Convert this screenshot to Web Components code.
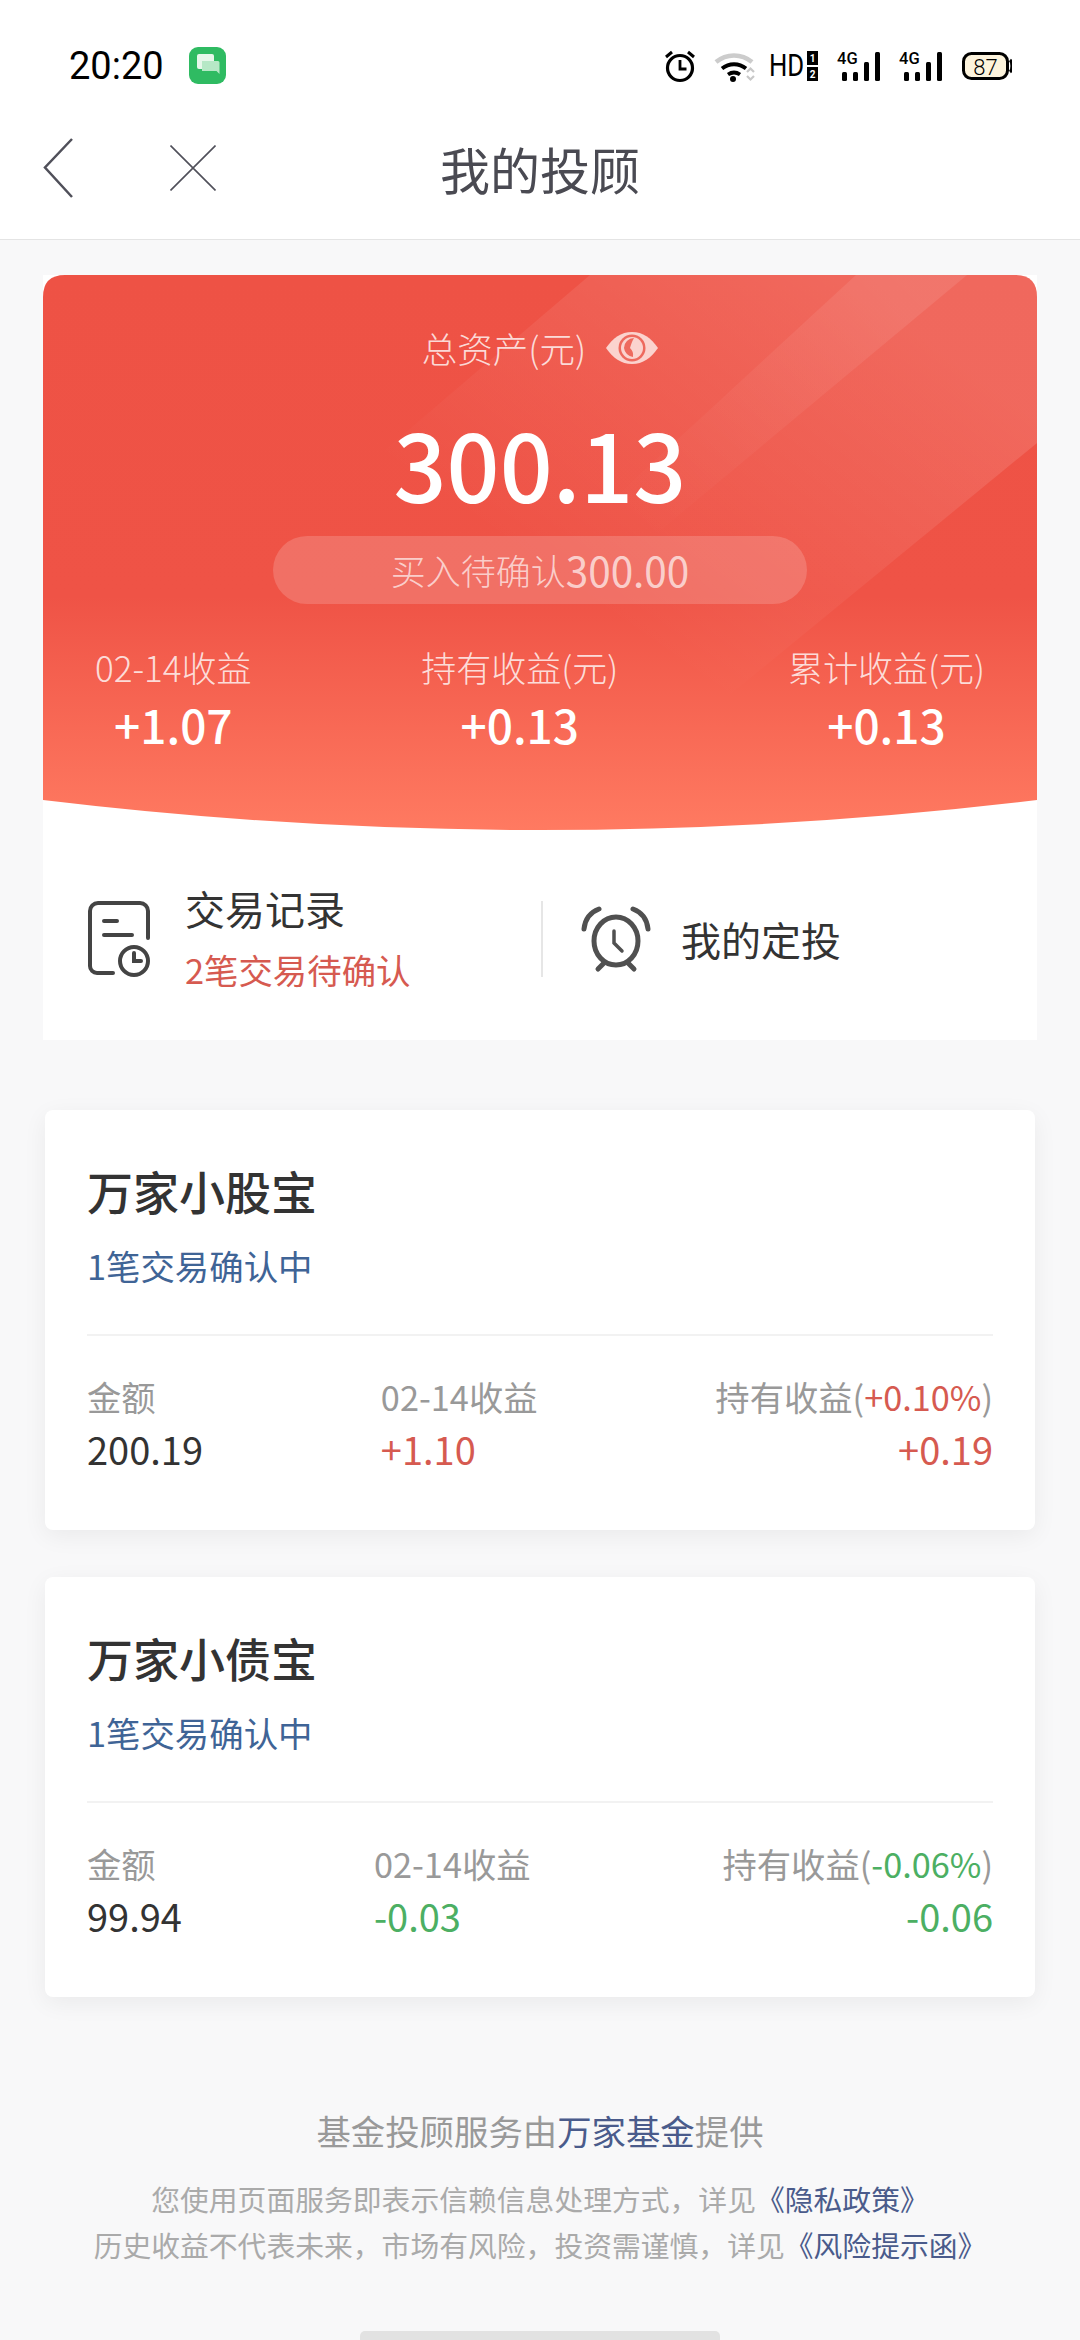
<!DOCTYPE html>
<html lang="zh-CN">
<head>
<meta charset="utf-8">
<title>我的投顾</title>
<style>
html,body{margin:0;padding:0;}
body{width:1080px;height:2340px;overflow:hidden;background:#f8f8f9;font-family:"Noto Sans CJK SC","Noto Sans",sans-serif;}
</style>
</head>
<body>
<status-bar></status-bar>
<nav-bar>我的投顾</nav-bar>
<asset-card></asset-card>
<fund-card style="margin-top:70px">
  <span slot="name">万家小股宝</span>
  <span slot="sub">1笔交易确认中</span>
  <fund-stat><span slot="label">金额</span><span slot="value">200.19</span></fund-stat>
  <fund-stat><span slot="label">02-14收益</span><span slot="value" style="color:#d65a50">+1.10</span></fund-stat>
  <fund-stat align="end"><span slot="label">持有收益(<span style="color:#d65a50">+0.10%</span>)</span><span slot="value" style="color:#d65a50">+0.19</span></fund-stat>
</fund-card>
<fund-card style="margin-top:47px">
  <span slot="name">万家小债宝</span>
  <span slot="sub">1笔交易确认中</span>
  <fund-stat><span slot="label">金额</span><span slot="value">99.94</span></fund-stat>
  <fund-stat><span slot="label">02-14收益</span><span slot="value" style="color:#4caf63">-0.03</span></fund-stat>
  <fund-stat align="end"><span slot="label">持有收益(<span style="color:#4caf63">-0.06%</span>)</span><span slot="value" style="color:#4caf63">-0.06</span></fund-stat>
</fund-card>
<page-footer></page-footer>
<home-bar></home-bar>
<script>
function def(name,html){
  customElements.define(name,class extends HTMLElement{
    constructor(){super();this.attachShadow({mode:'open'}).innerHTML=html;}
  });
}
const CJK='"Noto Sans CJK SC","Noto Sans",sans-serif';
const SIG=`<text x="837" y="64" font-size="16.500" font-weight="500">4G</text>
    <rect x="842" y="72" width="5" height="9" rx="1.500"/><rect x="853" y="72" width="5" height="9" rx="1.500"/><rect x="864" y="62" width="5" height="19" rx="1.500"/><rect x="875" y="52" width="5" height="29" rx="1.500"/>`;

def('status-bar',`<style>
:host{display:flex;align-items:center;height:120px;box-sizing:border-box;padding:11px 0 0 69px;background:#fff;color:#000}
.t{font:400 38px/1 Roboto,sans-serif;width:120px}
.app{display:block}
.sp{flex:1}
.icons{display:block;margin-right:68px}
text{font-family:Roboto,sans-serif}
</style>
<span class="t">20:20</span>
<svg class="app" width="37" height="37" viewBox="0 0 37 37"><rect width="37" height="37" rx="9" fill="#2fbb62"/><rect x="8" y="7" width="17" height="15" rx="2" fill="#e6f7ea"/><path d="M13 14h16a1.500 1.500 0 0 1 1.500 1.500V27l-3-3H13z" fill="#b6e8c6"/></svg>
<span class="sp"></span>
<svg class="icons" width="348" height="36" viewBox="664 48 348 36">
  <g fill="none" stroke="#000" stroke-width="3.200">
    <circle cx="680" cy="68" r="12.500"/>
    <path d="M680 60v9h6.500" stroke-width="2.800"/>
    <path d="M666 57l6-5M694 57l-6-5" stroke-width="3"/>
  </g>
  <path d="M716 62a28 28 0 0 1 36 0" fill="none" stroke="#ccc" stroke-width="4.500"/>
  <path d="M722 68.500a19 19 0 0 1 24 0M728 74.500a11 11 0 0 1 12 0" fill="none" stroke="#000" stroke-width="3.800"/>
  <circle cx="733" cy="79" r="3" fill="#000"/>
  <path d="M747 72l3.500-3.500 3.500 3.500M747 76l3.500 3.500 3.500-3.500" fill="none" stroke="#c8c8c8" stroke-width="2.200"/>
  <text transform="translate(769 76) scale(.83 1)" font-size="31" font-weight="400">HD</text>
  <rect x="807" y="51" width="11" height="14" fill="#000"/><rect x="807" y="67" width="11" height="14" fill="#000"/>
  <text x="812.500" y="62" font-size="10" font-weight="700" fill="#fff" text-anchor="middle">1</text>
  <text x="812.500" y="78" font-size="10" font-weight="700" fill="#fff" text-anchor="middle">2</text>
  <g>${SIG}</g>
  <g transform="translate(62 0)">${SIG}</g>
  <rect x="963.500" y="53.500" width="44" height="25" rx="8" fill="#fdf4dd" stroke="#000" stroke-width="3"/>
  <path d="M1010 60c2.500 2 2.500 10 0 12" fill="none" stroke="#000" stroke-width="3"/>
  <text x="985.500" y="74.500" font-size="22" text-anchor="middle" font-weight="300">87</text>
</svg>`);

def('nav-bar',`<style>
:host{display:grid;grid-template-columns:1fr auto 1fr;align-items:center;height:120px;box-sizing:border-box;padding-bottom:24px;border-bottom:1px solid #e4e4e4;background:#fff;color:#4a4a52;font:400 50px/1 ${CJK}}
.l{display:flex;align-items:center;gap:97px;padding-left:43px}
svg{display:block}
</style>
<div class="l">
<svg width="30" height="60" viewBox="0 0 30 60"><path d="M29 1L2 29.500 29 59" fill="none" stroke="#50505a" stroke-width="2.500"/></svg>
<svg width="46" height="46" viewBox="0 0 46 46"><path d="M.5.5l45 45M45.500.5l-45 45" fill="none" stroke="#50505a" stroke-width="1.600"/></svg>
</div>
<div><slot></slot></div>
<div></div>`);

def('asset-stat',`<style>
:host{display:flex;flex-direction:column;align-items:center}
.l{font:300 35px/46px ${CJK};color:rgba(255,255,255,.8)}
.v{font:500 46px/64px ${CJK};color:#fff;margin-top:2px}
</style><div class="l"><slot name="label"></slot></div><div class="v"><slot name="value"></slot></div>`);

def('asset-card',`<style>
:host{display:block;margin:35px 43px 0;height:765px;background:#fff;}
.head{position:relative;height:555px;box-sizing:border-box;padding-top:52px;display:flex;flex-direction:column;align-items:center;
 background:linear-gradient(180deg,#ee5245 0,#ef5346 58%,#ff7a61 100%);
 clip-path:path('M0 22 Q0 0 22 0 H972 Q994 0 994 22 V525 Q497 585 0 525 Z');color:#fff}
.stripes{position:absolute;left:0;top:0}
.head>*:not(.stripes){position:relative}
.title{display:flex;align-items:center;height:42px;font:300 35.500px/42px ${CJK};color:rgba(255,255,255,.8)}
.title svg{display:block;margin-left:20px}
.big{font:500 93px/120px ${CJK};margin-top:34px;color:#fff}
.pill{width:534px;height:68px;border-radius:34px;background:rgba(255,255,255,.17);margin-top:13px;display:flex;align-items:center;justify-content:center;color:rgba(255,255,255,.68);font:300 35px/68px ${CJK}}
.pill b{font-weight:400;font-size:40.500px}
.stats{align-self:stretch;display:flex;justify-content:space-between;padding:0 52px;margin-top:40px}
.acts{display:flex;align-items:center;height:210px;box-sizing:border-box;padding-top:8px;color:#333}
.a1{display:flex;align-items:center;width:498px;box-sizing:border-box;padding-left:45px;gap:33px}
.a2{display:flex;align-items:center;padding-left:38px;gap:30px;border-left:2px solid #e6e6e6;height:76px;font:400 40px/1 ${CJK}}
.tt{font:400 40px/52px ${CJK}}
.st{font:400 34.400px/46px ${CJK};color:#d65a50;margin-top:12px}
.a1 > div{margin-top:-4px}
svg{display:block}
</style>
<div class="head">
<svg class="stripes" width="994" height="555" viewBox="0 0 994 555">
<defs>
<linearGradient id="a" gradientUnits="userSpaceOnUse" x1="800" y1="0" x2="560" y2="340"><stop offset="0" stop-color="#fff" stop-opacity=".13"/><stop offset="1" stop-color="#fff" stop-opacity="0"/></linearGradient>
<linearGradient id="b" gradientUnits="userSpaceOnUse" x1="860" y1="10" x2="600" y2="260"><stop offset="0" stop-color="#fff" stop-opacity=".09"/><stop offset="1" stop-color="#fff" stop-opacity="0"/></linearGradient>
</defs>
<path d="M547 0H994V168L650 450H20z" fill="url(#a)"/>
<path d="M813 0H924L600 270H520z" fill="url(#b)"/>
</svg>
<div class="title">总资产(元)<svg width="52" height="32" viewBox="0 0 52 32"><path d="M0 16C7 6 15 0 26 0s19 6 26 16c-7 10-15 16-26 16S7 26 0 16z" fill="#fbd3ce"/><circle cx="26" cy="16" r="13.500" fill="#ee6a5e"/><circle cx="26" cy="16" r="11" fill="#fbd3ce"/><path d="M28 6a10 10 0 0 0-10 10 10 10 0 0 0 9 9 10 10 0 0 0-3-9c1-3 2-7 4-10z" fill="#ee6a5e"/></svg></div>
<div class="big">300.13</div>
<div class="pill">买入待确认<b>300.00</b></div>
<div class="stats">
<asset-stat><span slot="label">02-14收益</span><span slot="value">+1.07</span></asset-stat>
<asset-stat><span slot="label">持有收益(元)</span><span slot="value">+0.13</span></asset-stat>
<asset-stat><span slot="label">累计收益(元)</span><span slot="value">+0.13</span></asset-stat>
</div>
</div>
<div class="acts">
<div class="a1">
<svg width="64" height="76" viewBox="0 0 64 76" fill="none" stroke="#444" stroke-width="4" stroke-linecap="round"><path d="M60 37V10a8 8 0 0 0-8-8H10a8 8 0 0 0-8 8v55a7 7 0 0 0 7 7h16"/><path d="M16 20h13M16 34h28"/><circle cx="46" cy="60" r="14"/><path d="M46 52v8h7"/></svg>
<div><div class="tt">交易记录</div><div class="st">2笔交易待确认</div></div>
</div>
<div class="a2">
<svg width="70" height="68" viewBox="0 0 70 68" fill="none" stroke="#505050" stroke-width="5" stroke-linecap="round"><ellipse cx="35" cy="36" rx="22" ry="24"/><path d="M33 26v12l8 8" stroke-width="3.500"/><path d="M3 24C4 14 10 7 18 4M67 24C66 14 60 7 52 4"/><path d="M17 64l6-6M53 64l-6-6"/></svg>
<span>我的定投</span>
</div>
</div>`);

def('fund-stat',`<style>
:host{display:flex;flex-direction:column;align-items:flex-start}
:host([align=end]){align-items:flex-end}
.l{font:400 34.300px/50px ${CJK};color:#999}
.v{font:400 38px/56px ${CJK};color:#333}
</style><div class="l"><slot name="label"></slot></div><div class="v"><slot name="value"></slot></div>`);

def('fund-card',`<style>
:host{display:block;margin:0 45px;height:420px;box-sizing:border-box;padding:50px 42px 0;background:#fff;border-radius:8px;box-shadow:0 6px 24px rgba(0,0,0,.06)}
.n{font:500 46px/60px ${CJK};color:#333}
.s{font:400 34.400px/50px ${CJK};color:#3f6496;margin-top:20px}
.d{height:2px;background:#f2f2f2;margin-top:44px}
.row{display:flex;justify-content:space-between;margin-top:35px}
</style>
<div class="n"><slot name="name"></slot></div>
<div class="s"><slot name="sub"></slot></div>
<div class="d"></div>
<div class="row"><slot></slot></div>`);

def('page-footer',`<style>
:host{display:block;text-align:center;margin-top:106px}
.a{font:400 34.400px/54px ${CJK};color:#999}
.b{font:400 28.800px/46px ${CJK};color:#aaa}
i{font-style:normal;color:#4a5b8b}
.sp{height:19px}
</style>
<div class="a">基金投顾服务由<i>万家基金</i>提供</div>
<div class="sp"></div>
<div class="b">您使用页面服务即表示信赖信息处理方式，详见<i>《隐私政策》</i></div>
<div class="b">历史收益不代表未来，市场有风险，投资需谨慎，详见<i>《风险提示函》</i></div>`);

def('home-bar',`<style>
:host{display:block;position:absolute;left:360px;top:2331px;width:360px;height:9px;background:#e2e2e2;border-radius:5px 5px 0 0}
</style>`);
</script>
</body>
</html>
